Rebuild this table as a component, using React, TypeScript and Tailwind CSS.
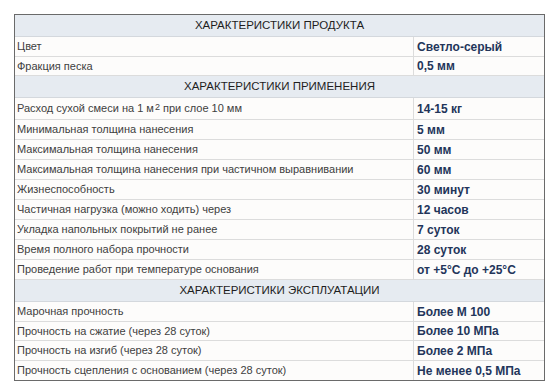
import React from "react";

type Row =
  | { kind: "h"; text: string; h: number }
  | { kind: "d"; label: React.ReactNode; value: string; h: number };

const rows: Row[] = [
  { kind: "h", text: "ХАРАКТЕРИСТИКИ ПРОДУКТА", h: 22 },
  { kind: "d", label: "Цвет", value: "Светло-серый", h: 20 },
  { kind: "d", label: "Фракция песка", value: "0,5 мм", h: 19 },
  { kind: "h", text: "ХАРАКТЕРИСТИКИ ПРИМЕНЕНИЯ", h: 22 },
  {
    kind: "d",
    label: (
      <>
        Расход сухой смеси на 1 м<sup className="text-[9px] relative -top-[2px] ml-[1px]">2</sup> при слое 10 мм
      </>
    ),
    value: "14-15 кг",
    h: 22,
  },
  { kind: "d", label: "Минимальная толщина нанесения", value: "5 мм", h: 20 },
  { kind: "d", label: "Максимальная толщина нанесения", value: "50 мм", h: 20 },
  { kind: "d", label: "Максимальная толщина нанесения при частичном выравнивании", value: "60 мм", h: 20 },
  { kind: "d", label: "Жизнеспособность", value: "30 минут", h: 20 },
  { kind: "d", label: "Частичная нагрузка (можно ходить) через", value: "12 часов", h: 20 },
  { kind: "d", label: "Укладка напольных покрытий не ранее", value: "7 суток", h: 20 },
  { kind: "d", label: "Время полного набора прочности", value: "28 суток", h: 20 },
  { kind: "d", label: "Проведение работ при температуре основания", value: "от +5°С до +25°С", h: 20 },
  { kind: "h", text: "ХАРАКТЕРИСТИКИ ЭКСПЛУАТАЦИИ", h: 22 },
  { kind: "d", label: "Марочная прочность", value: "Более М 100", h: 20 },
  { kind: "d", label: "Прочность на сжатие (через 28 суток)", value: "Более 10 МПа", h: 19 },
  { kind: "d", label: "Прочность на изгиб (через 28 суток)", value: "Более 2 МПа", h: 20 },
  { kind: "d", label: "Прочность сцепления с основанием (через 28 суток)", value: "Не менее 0,5 МПа", h: 19 },
];

export default function App() {
  return (
    <div className="w-[560px] h-[392px] bg-white pt-[14px] pl-[14px]" style={{ fontFamily: '"Liberation Sans", Arial, sans-serif' }}>
      <div className="w-[531px] border border-[#6a6a6a] bg-[#fdfcfb]">
        {rows.map((r, i) => {
          const last = i === rows.length - 1;
          if (r.kind === "h") {
            return (
              <div
                key={i}
                className={`flex items-center justify-center bg-[#e6ebf1] text-[11.5px] text-[#1e1e1e] ${last ? "" : "border-b border-[#d4d8dd]"}`}
                style={{ height: r.h }}
              >
                {r.text}
              </div>
            );
          }
          return (
            <div
              key={i}
              className={`flex ${last ? "" : "border-b border-[#dcdcdc]"}`}
              style={{ height: r.h }}
            >
              <div className="w-[399px] border-r border-[#dcdcdc] pl-[2px] flex items-center text-[11px] text-[#404040] whitespace-nowrap">
                <span>{r.label}</span>
              </div>
              <div className="flex-1 pl-[3px] flex items-center text-[12px] font-bold text-[#23355a] whitespace-nowrap">
                {r.value}
              </div>
            </div>
          );
        })}
      </div>
    </div>
  );
}
